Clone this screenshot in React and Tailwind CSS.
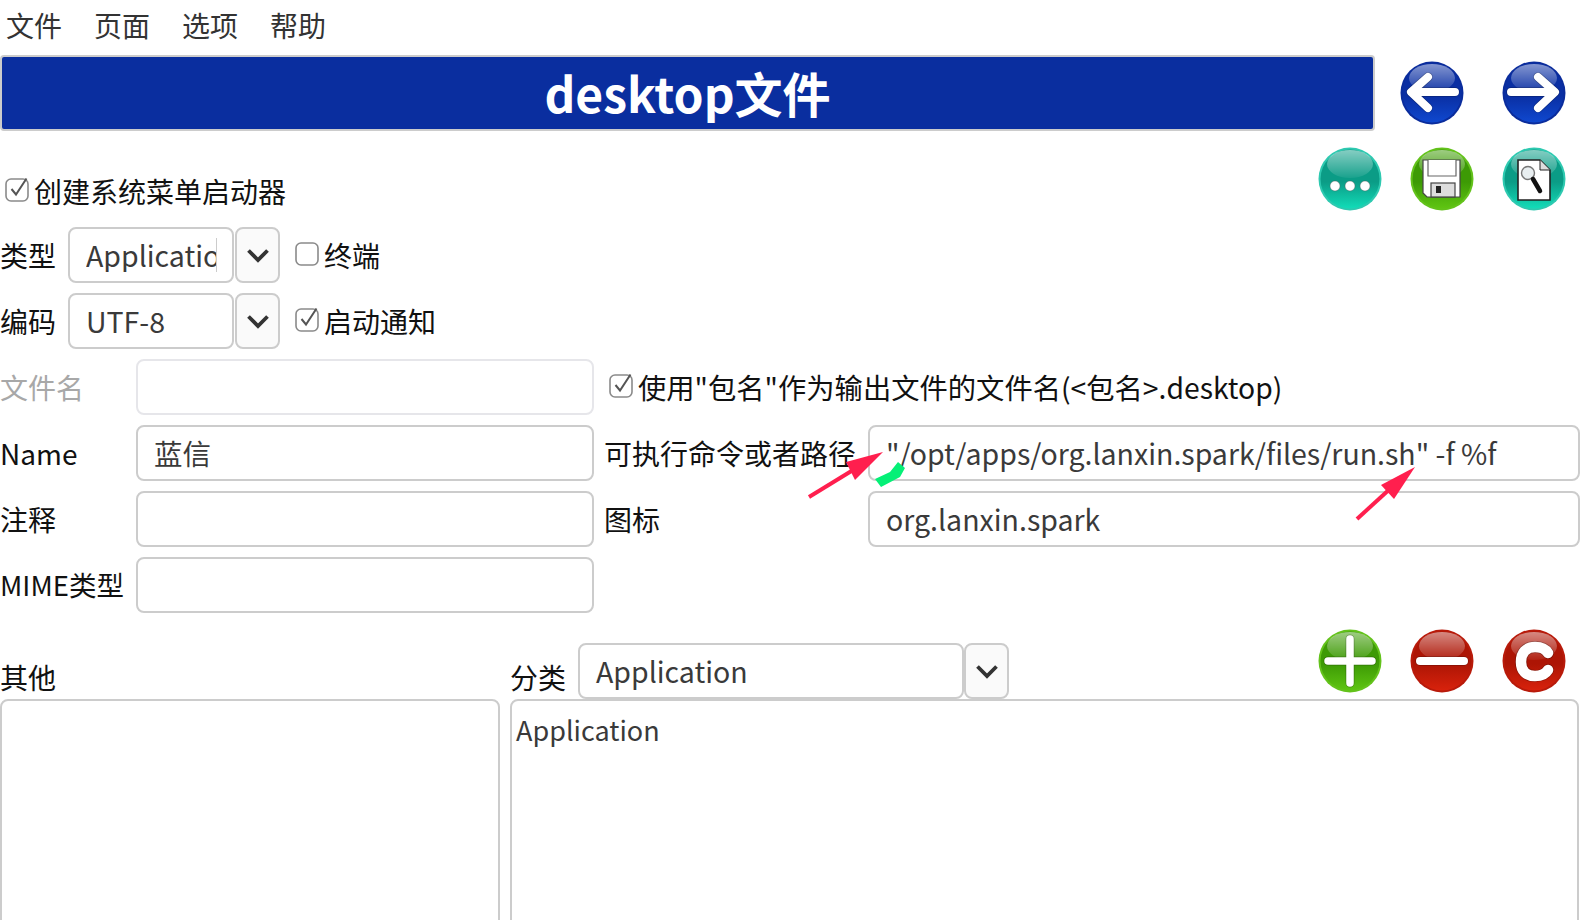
import { useId } from "react";

// glossy round toolbar button, colours come in as [top, bottom, rim]
function Orb({ colors, children }) {
  const id = useId();
  return (
    <svg width="64" height="64" viewBox="0 0 64 64" className="shrink-0">
      <defs>
        <linearGradient id={id + "b"} x1="0" y1="0" x2="0" y2="1">
          <stop offset="0" stopColor={colors[0]} />
          <stop offset="0.55" stopColor={colors[0]} />
          <stop offset="1" stopColor={colors[1]} />
        </linearGradient>
        <linearGradient id={id + "g"} x1="0" y1="0" x2="0" y2="1">
          <stop offset="0" stopColor="#fff" stopOpacity="0.5" />
          <stop offset="1" stopColor="#fff" stopOpacity="0.06" />
        </linearGradient>
      </defs>
      <circle cx="32" cy="32" r="31.5" fill={colors[2]} />
      <circle cx="32" cy="32" r="29.5" fill={`url(#${id}b)`} />
      <ellipse cx="32" cy="17" rx="23" ry="14" fill={`url(#${id}g)`} />
      {children}
    </svg>
  );
}

const BLUE = ["#0a2fa3", "#0f48cf", "#0a2c9c"];
const TEAL = ["#0b9c86", "#12dcb8", "#2ec9b0"];
const GREEN = ["#3d9a05", "#5fc512", "#63c21b"];
const RED = ["#ad1505", "#d8220c", "#b81a0a"];

function White({ d, w = 7 }) {
  return (
    <>
      <path d={d} fill="none" stroke="#000" strokeOpacity="0.25" strokeWidth={w + 1.5} strokeLinecap="round" strokeLinejoin="round" />
      <path d={d} fill="none" stroke="#fff" strokeWidth={w} strokeLinecap="round" strokeLinejoin="round" />
    </>
  );
}

const ArrowLeft = () => <Orb colors={BLUE}><White d="M55 31H13M28 16L11 31L28 47" w={8} /></Orb>;
const ArrowRight = () => <Orb colors={BLUE}><White d="M9 31H51M36 16L53 31L36 47" w={8} /></Orb>;
const Dots = () => (
  <Orb colors={TEAL}>
    <circle cx="17" cy="39" r="5" fill="#fff" stroke="#555" strokeOpacity="0.4" />
    <circle cx="32" cy="39" r="5" fill="#fff" stroke="#555" strokeOpacity="0.4" />
    <circle cx="47" cy="39" r="5" fill="#fff" stroke="#555" strokeOpacity="0.4" />
  </Orb>
);
const Floppy = () => (
  <Orb colors={GREEN}>
    <path d="M13 13H50V50H17L13 46Z" fill="#fff" stroke="#444" strokeWidth="1.2" />
    <path d="M18 13V29H46V13" fill="#fff" stroke="#666" strokeWidth="1.2" />
    <rect x="21" y="36" width="24" height="14" fill="#ddd" stroke="#444" strokeWidth="1.2" />
    <rect x="26" y="39" width="5" height="7" fill="#222" />
  </Orb>
);
const DocSearch = () => (
  <Orb colors={TEAL}>
    <path d="M16 13H38L48 23V53H16Z" fill="#fff" stroke="#222" strokeWidth="1.6" />
    <path d="M38 13V23H48" fill="#ddd" stroke="#222" strokeWidth="1" />
    <circle cx="26" cy="26" r="6.5" fill="#e8eef0" stroke="#777" strokeWidth="1.4" />
    <path d="M31 32L38 44" stroke="#111" strokeWidth="4.5" strokeLinecap="round" />
  </Orb>
);
const Plus = () => <Orb colors={GREEN}><White d="M32 10V54M10 32H54" w={7.5} /></Orb>;
const Minus = () => <Orb colors={RED}><White d="M10 32H54" w={8} /></Orb>;
const Clear = () => <Orb colors={RED}><White d="M46 24C43 19 38 18 33 18C24 18 19 24 19 33C19 42 24 47 33 47C38 47 43 46 46 41" w={10.5} /></Orb>;

function Check({ checked }) {
  return (
    <svg width="26" height="26" viewBox="0 0 26 26" className="shrink-0 mb-[4px]">
      <rect x="1" y="3" width="22" height="22" rx="5" fill="#fff" stroke="#8a8a8a" strokeWidth="1.6" />
      {checked && <path d="M6.5 13L11 18.5L21.5 2.5" fill="none" stroke="#555" strokeWidth="2" />}
    </svg>
  );
}

function Chevron({ className = "ml-[1px]" }) {
  return (
    <div className={`w-[45px] h-full flex items-center justify-center rounded-[8px] border-2 border-[#cccccc] bg-[#fafafa] ${className}`}>
      <svg width="24" height="15" viewBox="0 0 24 15">
        <path d="M2.5 2.5L12 12L21.5 2.5" fill="none" stroke="#333" strokeWidth="3.8" />
      </svg>
    </div>
  );
}

function Field({ value = "", className = "", light = false }) {
  return (
    <div className={`h-full flex items-center px-[16px] rounded-[8px] border-2 bg-white text-[28.5px] text-[#3a3a3a] whitespace-nowrap ${light ? "border-[#e6e6ea]" : "border-[#cccccc]"} ${className}`}>
      {value}
    </div>
  );
}

export default function App() {
  return (
    <div className="relative w-[1583px] h-[920px] overflow-hidden bg-white text-[28px] leading-none text-[#111] font-['Noto_Sans_CJK_SC','Noto_Sans',sans-serif]">
      <div className="h-[55px] flex items-center gap-[32px] pl-[6px] pb-[6px] text-[#333]">
        <span>文件</span>
        <span>页面</span>
        <span>选项</span>
        <span>帮助</span>
      </div>

      <div className="h-[76px] flex items-center">
        <div className="w-[1375px] h-full flex items-center justify-center rounded-[4px] border-2 border-[#cccccc] bg-[#0a2e9f] text-white font-bold text-[48px] pb-[2px]">
          desktop文件
        </div>
        <div className="ml-[25px] flex gap-[38px]">
          <ArrowLeft />
          <ArrowRight />
        </div>
      </div>

      <div className="mt-[16px] h-[69px] flex justify-between">
        <div className="flex items-center gap-[3px] pl-[5px] pt-[16px] h-[71px]">
          <Check checked />
          <span>创建系统菜单启动器</span>
        </div>
        <div className="flex pr-[17px]">
          <Dots />
          <div className="mx-[28px]"><Floppy /></div>
          <DocSearch />
        </div>
      </div>

      <div className="mt-[11px] flex flex-col gap-[10px]">
        <div className="h-[56px] flex items-center">
          <span className="w-[68px]">类型</span>
          <div className="w-[166px] h-full flex items-center pl-[16px] rounded-[8px] border-2 border-[#cccccc] text-[28.5px] text-[#3a3a3a]">
            <div className="w-[131px] h-[34px] overflow-hidden border-r border-[#cccccc] leading-[34px] whitespace-nowrap">Application</div>
          </div>
          <Chevron />
          <div className="ml-[15px] flex items-center gap-[3px]">
            <Check />
            <span>终端</span>
          </div>
        </div>

        <div className="h-[56px] flex items-center">
          <span className="w-[68px]">编码</span>
          <Field value="UTF-8" className="w-[166px]" />
          <Chevron />
          <div className="ml-[15px] flex items-center gap-[3px]">
            <Check checked />
            <span>启动通知</span>
          </div>
        </div>

        <div className="h-[56px] flex items-center">
          <span className="w-[136px] text-[#a8a8a8]">文件名</span>
          <Field light className="w-[458px]" />
          <div className="ml-[15px] flex items-center gap-[3px]">
            <Check checked />
            <span className="text-[28.3px]">使用"包名"作为输出文件的文件名(&lt;包名&gt;.desktop)</span>
          </div>
        </div>

        <div className="h-[56px] flex items-center">
          <span className="w-[136px]">Name</span>
          <Field value="蓝信" className="w-[458px]" />
          <span className="w-[274px] pl-[10px]">可执行命令或者路径</span>
          <Field value={'"/opt/apps/org.lanxin.spark/files/run.sh" -f %f'} className="w-[712px]" />
        </div>

        <div className="h-[56px] flex items-center">
          <span className="w-[136px]">注释</span>
          <Field className="w-[458px]" />
          <span className="w-[274px] pl-[10px]">图标</span>
          <Field value="org.lanxin.spark" className="w-[712px]" />
        </div>

        <div className="h-[56px] flex items-center">
          <span className="w-[136px] text-[27.5px]">MIME类型</span>
          <Field className="w-[458px]" />
        </div>
      </div>

      <div className="mt-[16px] h-[70px] flex">
        <div className="w-[510px] pt-[34px]">其他</div>
        <div className="w-[68px] pt-[34px]">分类</div>
        <div className="mt-[14px] h-[56px] flex">
          <Field value="Application" className="w-[386px]" />
          <Chevron className="ml-0" />
        </div>
        <div className="ml-auto flex pr-[17px]">
          <Plus />
          <div className="mx-[28px]"><Minus /></div>
          <Clear />
        </div>
      </div>

      <div className="flex gap-[10px] h-[300px]">
        <div className="w-[500px] rounded-[8px] border-2 border-[#cccccc]" />
        <div className="w-[1069px] rounded-[8px] border-2 border-[#cccccc] pl-[4px] pt-[15px] text-[27px] text-[#3a3a3a]">Application</div>
      </div>

      {/* hand-drawn marks lying over the form */}
      <svg className="absolute inset-0 pointer-events-none" width="1583" height="920" viewBox="0 0 1583 920">
        <path d="M809 497L858 467" stroke="#ff1f4e" strokeWidth="4" />
        <path d="M883 452L846 462L855 480Z" fill="#ff1f4e" />
        <path d="M1357 519L1392 487" stroke="#ff1f4e" strokeWidth="4" />
        <path d="M1415 467L1381 485L1394 499Z" fill="#ff1f4e" />
        <path d="M875 479L881 487L900 477L905 468L898 462L890 472Z" fill="#05f077" />
      </svg>
    </div>
  );
}
